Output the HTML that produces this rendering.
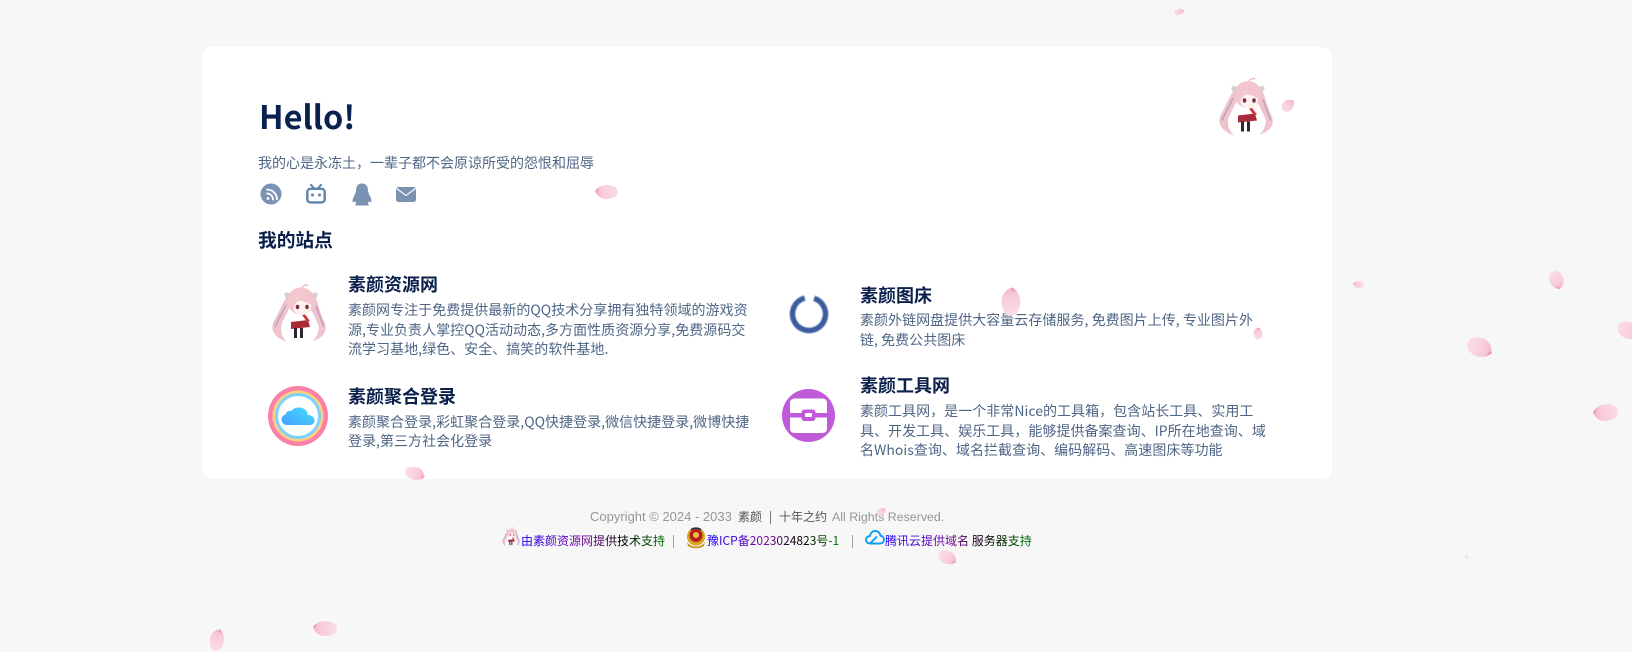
<!DOCTYPE html>
<html lang="zh"><head><meta charset="utf-8"><title>素颜</title>
<style>
html,body{margin:0;padding:0;width:1632px;height:648px;overflow:hidden;background:#f7f7f7;font-family:"Noto Sans CJK SC","Liberation Sans",sans-serif}
.a{position:absolute;white-space:nowrap}
.card{position:absolute;left:202px;top:47px;width:1130px;height:432px;background:#fff;border-radius:10px}
.t{font-weight:700;font-size:18px;line-height:24px;color:#0a1f4a}
.d{font-size:14px;line-height:19.6px;color:#4f6586;letter-spacing:.03px}
.g{background:linear-gradient(90deg,#1c00ff 0%,#7a0a9a 45%,#000 70%,#007a00 100%);-webkit-background-clip:text;background-clip:text;color:transparent}
.f{font-size:12px;line-height:18px;color:#555}
.l{font-family:"Liberation Sans",sans-serif;font-size:13px;line-height:18px;color:#969696}
svg{position:absolute;overflow:visible}
</style></head><body>
<svg width="0" height="0" style="left:0;top:0">
<defs>
<linearGradient id="pg" x1="0" x2="1" y1="0" y2="0"><stop offset="0" stop-color="#fbdde6"/><stop offset=".7" stop-color="#f8cadb"/><stop offset="1" stop-color="#f5aec6"/></linearGradient>
<linearGradient id="cg" x1="0" x2="1" y1="1" y2="0"><stop offset="0" stop-color="#4a9dff"/><stop offset="1" stop-color="#3fe0ff"/></linearGradient>
<symbol id="petal" viewBox="0 0 40 24" preserveAspectRatio="none"><path d="M0 10C0 3 10 0 20 0C30 0 37 6 40 15L36 19C30 24 18 25 10 22C4 20 0 16 0 10Z" fill="url(#pg)"/><path d="M40 15L33 20L36 14Z" fill="#ef8fb0"/></symbol>
<symbol id="girl" viewBox="0 0 54 59">
<path d="M15 12C9 22 7 28 3 35C-2 43 -1 52 15 58C9 52 8 46 10 39C13 33 16 27 19 20Z" fill="#efc3cc"/>
<path d="M43 12C47 22 48 28 51 35C56 44 55 52 41 57C46 51 48 45 46 40C43 33 39 27 37 20Z" fill="#efc3cc"/>
<path d="M14 21C10 29 6 36 3 43M44 22C47 30 49 36 52 43" fill="none" stroke="#b89ac4" stroke-width="1.300"/>
<path d="M22 31L35 31L36 38L20 38Z" fill="#fff"/>
<path d="M19 38L36 36L38 43L19 45Z" fill="#a92a38"/>
<path d="M32 29L38 37L35 38L30 31Z" fill="#d8323c"/>
<path d="M22 44H25V54H22ZM28 44H31V54H28Z" fill="#2d2730"/>
<ellipse cx="29" cy="17" rx="14" ry="13.500" fill="#f3c6cd"/>
<path d="M30 4C31 1 35 0 36 2" fill="none" stroke="#e3a5b3" stroke-width="1"/>
<ellipse cx="30" cy="22" rx="9" ry="9" fill="#fdf3ee"/>
<path d="M20 20C23 15 30 12 35 11C38 14 39 17 40 21C35 19 29 16 26 17C24 19 22 22 21 25Z" fill="#f3c6cd"/>
<ellipse cx="25.500" cy="23" rx="1.800" ry="2.200" fill="#7c2f48"/><ellipse cx="35" cy="23" rx="1.800" ry="2.200" fill="#7c2f48"/>
<circle cx="15" cy="11" r="2.600" fill="#d5cfcf"/><circle cx="43" cy="11" r="2.600" fill="#d5cfcf"/>
</symbol>
</defs></svg>

<div class="card"></div>

<div class="a" style="left:259px;top:95px;font-size:32.500px;line-height:42px;font-weight:700;color:#0a2150">Hello!</div>
<div class="a" style="left:258px;top:153px;font-size:14px;line-height:20px;color:#4f6586">我的心是永冻土，一辈子都不会原谅所受的怨恨和屈辱</div>

<!-- RSS -->
<svg style="left:260px;top:183px" width="22" height="22" viewBox="0 0 22 22"><circle cx="11" cy="11" r="10.500" fill="#7b93b3"/><g fill="none" stroke="#fff" stroke-width="1.800" stroke-linecap="round"><path d="M7 10.500a6 6 0 0 1 6 6"/><path d="M7 6.500a10 10 0 0 1 10 10"/></g><circle cx="8" cy="15.500" r="1.400" fill="#fff"/></svg>
<!-- Bilibili -->
<svg style="left:306px;top:184px" width="20" height="20" viewBox="0 0 20 20"><rect x="1.300" y="4.800" width="17.400" height="13.600" rx="3" fill="#fff" stroke="#5d85aa" stroke-width="2.400"/><path d="M5 0.800L8 4.300M15 0.800L12 4.300" stroke="#5d85aa" stroke-width="2" stroke-linecap="round"/><circle cx="6.500" cy="11" r="1.500" fill="#5d85aa"/><circle cx="13.500" cy="11" r="1.500" fill="#5d85aa"/></svg>
<!-- QQ -->
<svg style="left:351px;top:183px" width="22" height="23" viewBox="0 0 22 23"><path d="M11 0.500C6.500 0.500 5 4 5 7.500C5 9.500 3.800 11 2.800 13.500C1.800 16 1.200 18 1.700 19C2.300 19.500 3.400 18.700 4 18C4.300 19 4.700 20 5.500 20.500C4.500 21 4 21.600 4.200 22.500H17.800C18 21.600 17.500 21 16.500 20.500C17.300 20 17.700 19 18 18C18.600 18.700 19.700 19.500 20.300 19C20.800 18 20.200 16 19.200 13.500C18.200 11 17 9.500 17 7.500C17 4 15.500 0.500 11 0.500Z" fill="#7b93b3"/></svg>
<!-- Mail -->
<svg style="left:396px;top:187px" width="20" height="15" viewBox="0 0 20 15"><rect x="0" y="0" width="20" height="15" rx="2.500" fill="#7b93b3"/><path d="M0.500 1.500L10 8.500L19.500 1.500" fill="none" stroke="#fff" stroke-width="1.100"/></svg>

<div class="a" style="left:258px;top:228px;font-size:18.720px;line-height:24px;font-weight:700;color:#0a1f4a">我的站点</div>

<!-- item 1 -->
<svg style="left:272px;top:284px" width="54" height="59"><use href="#girl" width="54" height="59"/></svg>
<div class="a t" style="left:348px;top:272px">素颜资源网</div>
<div class="a d" style="left:348px;top:301px">素颜网专注于免费提供最新的QQ技术分享拥有独特领域的游戏资<br>源,专业负责人掌控QQ活动动态,多方面性质资源分享,免费源码交<br>流学习基地,绿色、安全、搞笑的软件基地.</div>

<!-- item 2 -->
<svg style="left:268px;top:386px" width="60" height="60" viewBox="0 0 60 60">
<circle cx="30" cy="30" r="30" fill="#fb80a6"/><circle cx="30" cy="30" r="25.500" fill="#fdd17f"/><circle cx="30" cy="30" r="23" fill="#7fd2ff"/><circle cx="30" cy="30" r="20" fill="#fff"/>
<path d="M19 39C16 39 13.500 36.500 13.500 33.500C13.500 31 15.300 29 17.500 28.500C18.300 25.500 21 24 23.500 25C25 22.500 28 21.500 31 21.500C36 21.500 39.500 25 40 29C44 29 46.500 31.500 46.500 34.500C46.500 37 44.500 39 41.500 39Z" fill="url(#cg)"/></svg>
<div class="a t" style="left:348px;top:384px">素颜聚合登录</div>
<div class="a d" style="left:348px;top:412.500px">素颜聚合登录,彩虹聚合登录,QQ快捷登录,微信快捷登录,微博快捷<br>登录,第三方社会化登录</div>

<!-- item 3 -->
<svg style="left:788px;top:293px" width="42" height="42" viewBox="0 0 42 42"><circle cx="21" cy="21" r="16.500" fill="none" stroke="#3c5c9e" stroke-width="5.500" stroke-dasharray="94 9.700" transform="rotate(-72 21 21)" style="filter:blur(.5px)"/></svg>
<div class="a t" style="left:860px;top:283px">素颜图床</div>
<div class="a d" style="left:860px;top:311px">素颜外链网盘提供大容量云存储服务, 免费图片上传, 专业图片外<br>链, 免费公共图床</div>

<!-- item 4 -->
<svg style="left:782px;top:389px" width="53" height="53" viewBox="0 0 53 53"><circle cx="26.500" cy="26.500" r="26.500" fill="#c15ad9"/>
<path d="M12 9.500H41C43 9.500 45 11.500 45 13.500V24H33.500C33.500 21.500 32 20.500 30.500 20.500H22.500C21 20.500 19.500 21.500 19.500 24H8V13.500C8 11.500 10 9.500 12 9.500Z" fill="#fff"/>
<path d="M8 28.500H19.500C19.500 31 21 32 22.500 32H30.500C32 32 33.500 31 33.500 28.500H45V40C45 42 43 44 41 44H12C10 44 8 42 8 40Z" fill="#fff"/>
<rect x="23" y="24" width="7" height="4" rx="1" fill="#fff"/></svg>
<div class="a t" style="left:860px;top:373px">素颜工具网</div>
<div class="a d" style="left:860px;top:402px">素颜工具网，是一个非常Nice的工具箱，包含站长工具、实用工<br>具、开发工具、娱乐工具，能够提供备案查询、IP所在地查询、域<br>名Whois查询、域名拦截查询、编码解码、高速图床等功能</div>

<!-- top-right mascot -->
<svg style="left:1219px;top:77px" width="54" height="60"><use href="#girl" width="54" height="60"/></svg>

<!-- footer -->
<div class="a l" style="left:590px;top:508px">Copyright © 2024 - 2033</div>
<div class="a f" style="left:738px;top:508px">素颜</div>
<div class="a f" style="left:769px;top:508px">|</div>
<div class="a f" style="left:779px;top:508px">十年之约</div>
<div class="a l" style="left:832px;top:508px;font-size:12.400px">All Rights Reserved.</div>

<svg style="left:502px;top:527px" width="18" height="20"><use href="#girl" width="18" height="20"/></svg>
<div class="a g" style="left:521px;top:532px;font-size:12px;line-height:18px">由素颜资源网提供技术支持</div>
<div class="a" style="left:672px;top:532px;font-size:12px;line-height:18px;color:#888">|</div>
<svg style="left:686px;top:527px" width="20" height="22" viewBox="0 0 20 22"><circle cx="10" cy="9.500" r="9" fill="#d9a520"/><circle cx="10" cy="8.500" r="6.500" fill="#b3201f"/><circle cx="10" cy="8" r="3" fill="#e8c14a"/><path d="M1 15C5 21 15 21 19 15L18 19C14 22 6 22 2 19Z" fill="#c9981f"/><path d="M5 3C7 .5 13 .5 15 3" fill="none" stroke="#1c2a4a" stroke-width="1.500"/></svg>
<div class="a g" style="left:707px;top:532px;font-size:12px;line-height:18px">豫ICP备2023024823号-1</div>
<div class="a" style="left:851px;top:532px;font-size:12px;line-height:18px;color:#888">|</div>
<svg style="left:865px;top:530px" width="20" height="15" viewBox="0 0 20 15"><path d="M5 13.500C2.800 13.500 1 11.800 1 9.700C1 7.500 2.800 6 5 6C5.500 3 7.500 1 10.300 1C13 1 15 3 15.500 5.700C17.700 6 19 7.700 19 9.700C19 11.800 17.300 13.500 15 13.500H5ZM5 13.500L12 6.500" fill="none" stroke="#0a9df0" stroke-width="1.900" stroke-linejoin="round"/></svg>
<div class="a g" style="left:885px;top:532px;font-size:12px;line-height:18px">腾讯云提供域名 服务器支持</div>

<!-- petals -->
<svg style="left:1174px;top:9px;transform:rotate(-25deg)" width="10" height="6"><use href="#petal" width="10" height="6"/></svg>
<svg style="left:1281px;top:100px;transform:rotate(-55deg)" width="14" height="11"><use href="#petal" width="14" height="11"/></svg>
<svg style="left:595px;top:185px;transform:rotate(175deg)" width="23" height="14"><use href="#petal" width="23" height="14"/></svg>
<svg style="left:997px;top:292px;transform:rotate(-95deg)" width="28" height="19"><use href="#petal" width="28" height="19"/></svg>
<svg style="left:1252px;top:329px;transform:rotate(-100deg)" width="12" height="9"><use href="#petal" width="12" height="9"/></svg>
<svg style="left:1353px;top:281px;transform:rotate(180deg)" width="11" height="7"><use href="#petal" width="11" height="7"/></svg>
<svg style="left:1547px;top:273px;transform:rotate(60deg)" width="19" height="14"><use href="#petal" width="19" height="14"/></svg>
<svg style="left:1467px;top:338px;transform:rotate(15deg)" width="26" height="19"><use href="#petal" width="26" height="19"/></svg>
<svg style="left:1617px;top:322px;transform:rotate(15deg)" width="24" height="17"><use href="#petal" width="24" height="17"/></svg>
<svg style="left:1593px;top:404px;transform:rotate(170deg)" width="25" height="17"><use href="#petal" width="25" height="17"/></svg>
<svg style="left:405px;top:467px;transform:rotate(10deg)" width="20" height="13"><use href="#petal" width="20" height="13"/></svg>
<svg style="left:876px;top:508px;transform:rotate(-40deg)" width="10" height="7"><use href="#petal" width="10" height="7"/></svg>
<svg style="left:938px;top:551px;transform:rotate(20deg)" width="19" height="13"><use href="#petal" width="19" height="13"/></svg>
<svg style="left:313px;top:621px;transform:rotate(178deg)" width="24" height="15"><use href="#petal" width="24" height="15"/></svg>
<svg style="left:206px;top:633px;transform:rotate(-85deg)" width="22" height="14"><use href="#petal" width="22" height="14"/></svg>
<svg style="left:1465px;top:556px;transform:rotate(30deg)" width="3" height="2"><use href="#petal" width="3" height="2"/></svg>
</body></html>
